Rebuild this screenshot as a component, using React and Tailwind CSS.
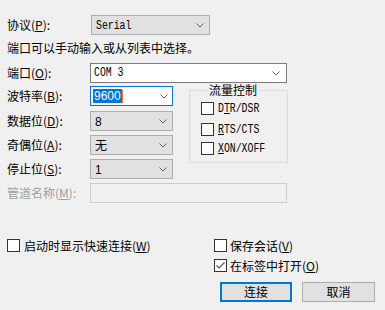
const ui = { fontFamily: '"Noto Sans CJK SC", "Noto Sans", sans-serif' };
const mono = { fontFamily: '"Liberation Mono", "DejaVu Sans Mono", monospace' };
const sans = { fontFamily: '"Liberation Sans", Arial, sans-serif' };

// narrow bitmap-like fixed font
const Mono = ({ children }) => (
    <span className="inline-block origin-left scale-x-[0.82] text-[12px] leading-[14px]" style={mono}>
        {children}
    </span>
);

const Chevron = () => (
    <svg width="8" height="5" viewBox="0 0 8 5" className="shrink-0">
        <path d="M0.5 0.5 L4 4 L7.5 0.5" fill="none" stroke="#606060" strokeWidth="1" />
    </svg>
);

const Label = ({ text, k, disabled }) => (
    <div className={`w-[83px] shrink-0 text-[12px] leading-[14px] ${disabled ? "text-[#a0a0a0]" : "text-black"}`}>
        {text}(<u>{k}</u>):
    </div>
);

// grey windows combobox (drop-down list)
const Select = ({ children, width }) => (
    <div className={`${width} h-[20px] flex items-center justify-between pl-[4px] pr-[5px] bg-[#e1e1e1] border border-[#adadad] text-[12px]`}>
        <span className="leading-[14px]">{children}</span>
        <Chevron />
    </div>
);

const Check = ({ checked }) => (
    <div className="w-[13px] h-[13px] shrink-0 bg-white border border-[#333] flex items-center justify-center">
        {checked && (
            <svg width="11" height="11" viewBox="0 0 11 11">
                <path d="M1.5 5.5 L4 8 L9.5 2.5" fill="none" stroke="#555" strokeWidth="1.2" />
            </svg>
        )}
    </div>
);

const FlowItem = ({ children, className }) => (
    <div className={`flex items-center gap-[4px] h-[13px] ${className}`}>
        <Check />
        <Mono>{children}</Mono>
    </div>
);

const Button = ({ children, primary }) => (
    <div
        className={`h-[20px] flex items-center justify-center bg-[#e1e1e1] text-[12px] ${
            primary ? "w-[72px] border-2 border-[#0078d7]" : "w-[73px] border border-[#adadad]"
        }`}
    >
        {children}
    </div>
);

export default function App() {
    return (
        <div className="w-[385px] h-[310px] bg-[#f0f0f0] text-black pl-[7px] pt-[15px] overflow-hidden" style={ui}>
            {/* 协议 */}
            <div className="flex items-center h-[20px]">
                <Label text="协议" k="P" />
                <div className="ml-px">
                    <Select width="w-[119px]"><Mono>Serial</Mono></Select>
                </div>
            </div>

            <div className="mt-[5px] text-[12px] leading-[16px]">端口可以手动输入或从列表中选择。</div>

            {/* 端口 */}
            <div className="flex items-center h-[20px] mt-[7px]">
                <Label text="端口" k="O" />
                <div className="w-[197px] h-[20px] flex items-center justify-between pl-[3px] pr-[6px] bg-white border border-[#7a7a7a]">
                    <Mono>COM 3</Mono>
                    <Chevron />
                </div>
            </div>

            <div className="flex mt-[3px]">
                <div className="flex flex-col">
                    <div className="flex items-center h-[20px]">
                        <Label text="波特率" k="B" />
                        <div className="w-[83px] h-[20px] flex items-center justify-between pl-[2px] pr-[4px] bg-white border border-[#0078d7]">
                            <span className="flex items-center">
                                <span className="bg-[#0078d7] text-white text-[12px] leading-[14px] px-px" style={sans}>9600</span>
                                <span className="w-px h-[13px] bg-[#f07f1f]" />
                            </span>
                            <Chevron />
                        </div>
                    </div>
                    <div className="flex items-center h-[20px] mt-[5px]">
                        <Label text="数据位" k="D" />
                        <Select width="w-[83px]"><span style={sans}>8</span></Select>
                    </div>
                    <div className="flex items-center h-[20px] mt-[4px]">
                        <Label text="奇偶位" k="A" />
                        <Select width="w-[83px]">无</Select>
                    </div>
                    <div className="flex items-center h-[20px] mt-[4px]">
                        <Label text="停止位" k="S" />
                        <Select width="w-[83px]"><span style={sans}>1</span></Select>
                    </div>
                </div>

                {/* 流量控制 */}
                <fieldset className="ml-[16px] -mt-[2px] w-[99px] h-[79px] border border-[#dcdcdc] pl-[11px] pb-[8px]">
                    <legend className="ml-[6px] px-[2px] text-[12px] leading-[12px]">流量控制</legend>
                    <FlowItem className="mt-[6px]">D<u>T</u>R/DSR</FlowItem>
                    <FlowItem className="mt-[8px]"><u>R</u>TS/CTS</FlowItem>
                    <FlowItem className="mt-[6px]"><u>X</u>ON/XOFF</FlowItem>
                </fieldset>
            </div>

            {/* 管道名称 */}
            <div className="flex items-center h-[20px] mt-[4px]">
                <Label text="管道名称" k="M" disabled />
                <div className="w-[197px] h-[20px] bg-[#f0f0f0] border border-[#cccccc]" />
            </div>

            {/* options */}
            <div className="flex items-center h-[13px] mt-[36px]">
                <div className="flex items-center gap-[4px] w-[207px]">
                    <Check />
                    <span className="text-[12px] leading-[13px]">启动时显示快速连接(<u>W</u>)</span>
                </div>
                <div className="flex items-center gap-[3px]">
                    <Check />
                    <span className="text-[12px] leading-[13px]">保存会话(<u>V</u>)</span>
                </div>
            </div>
            <div className="flex items-center h-[13px] mt-[7px] pl-[207px] gap-[3px]">
                <Check checked />
                <span className="text-[12px] leading-[13px]">在标签中打开(<u>O</u>)</span>
            </div>

            <div className="flex mt-[10px] pl-[213px] gap-[10px]">
                <Button primary>连接</Button>
                <Button>取消</Button>
            </div>
        </div>
    );
}
